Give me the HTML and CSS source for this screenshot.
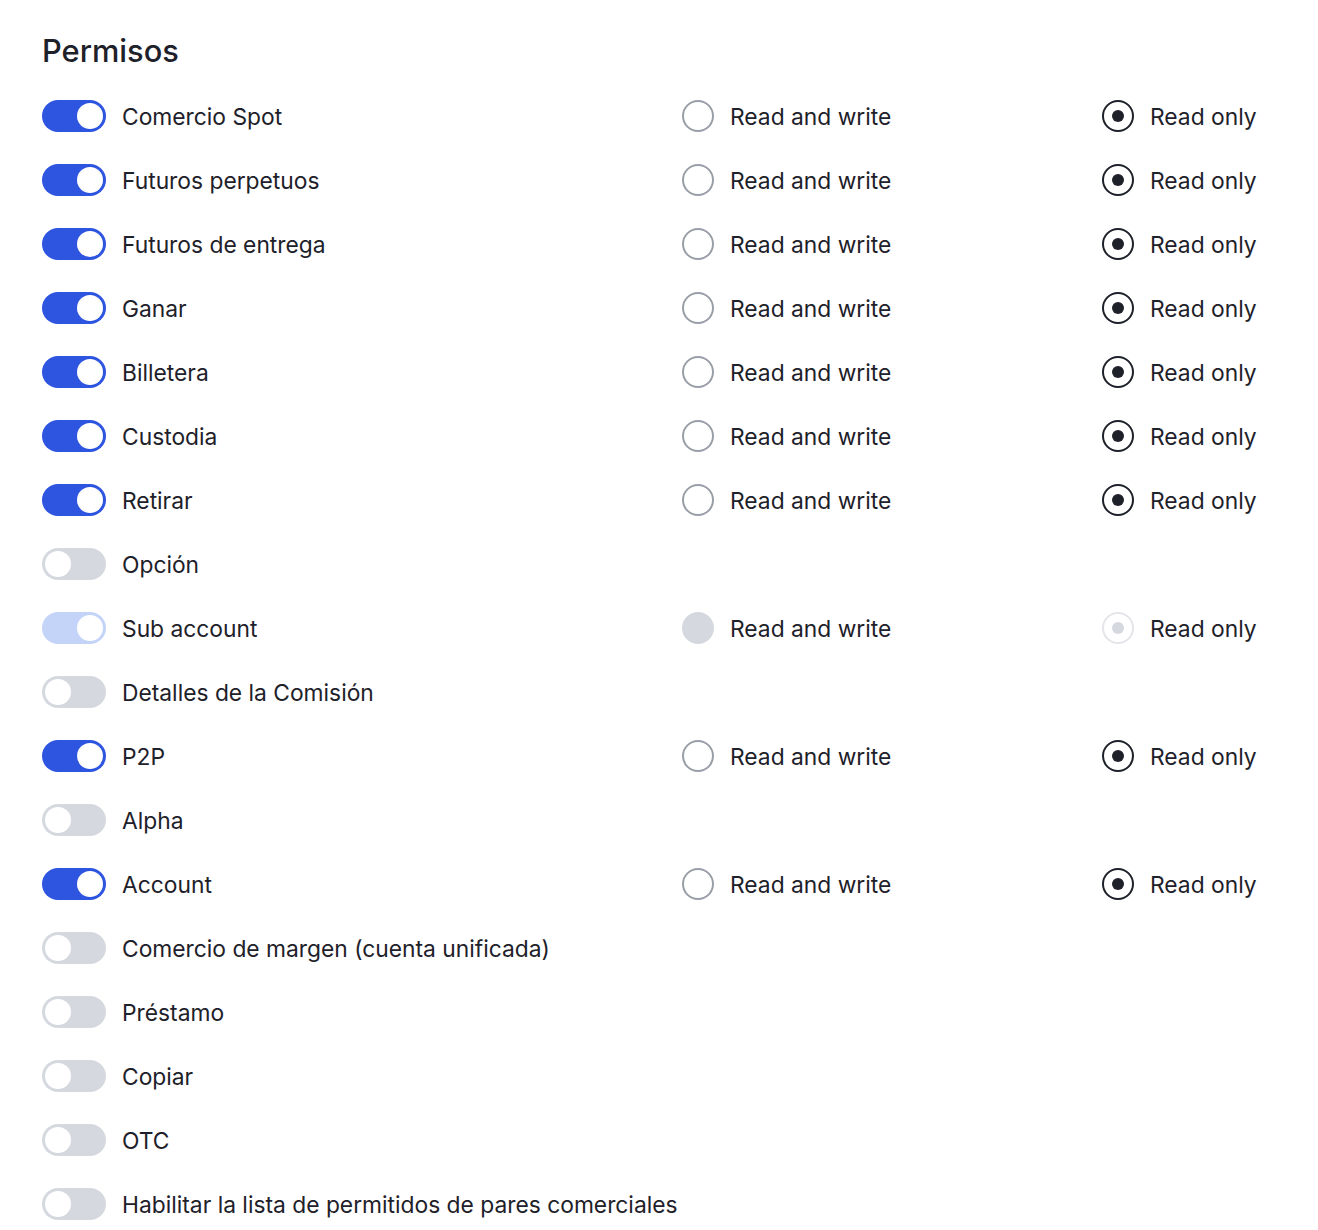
FILE: index.html
```html
<!DOCTYPE html>
<html lang="es">
<head>
<meta charset="utf-8">
<link rel="stylesheet" href="styles.css">
<title>Permisos</title>
</head>
<body>
<div class="panel">
  <h2 class="title">Permisos</h2>
  <div class="list">
    <div class="row">
      <div class="cell"><span class="switch on"><span class="knob"></span></span><span class="label">Comercio Spot</span></div>
      <div class="cell"><span class="radio"></span><span class="label">Read and write</span></div>
      <div class="cell"><span class="radio checked"></span><span class="label">Read only</span></div>
    </div>
    <div class="row">
      <div class="cell"><span class="switch on"><span class="knob"></span></span><span class="label">Futuros perpetuos</span></div>
      <div class="cell"><span class="radio"></span><span class="label">Read and write</span></div>
      <div class="cell"><span class="radio checked"></span><span class="label">Read only</span></div>
    </div>
    <div class="row">
      <div class="cell"><span class="switch on"><span class="knob"></span></span><span class="label">Futuros de entrega</span></div>
      <div class="cell"><span class="radio"></span><span class="label">Read and write</span></div>
      <div class="cell"><span class="radio checked"></span><span class="label">Read only</span></div>
    </div>
    <div class="row">
      <div class="cell"><span class="switch on"><span class="knob"></span></span><span class="label">Ganar</span></div>
      <div class="cell"><span class="radio"></span><span class="label">Read and write</span></div>
      <div class="cell"><span class="radio checked"></span><span class="label">Read only</span></div>
    </div>
    <div class="row">
      <div class="cell"><span class="switch on"><span class="knob"></span></span><span class="label">Billetera</span></div>
      <div class="cell"><span class="radio"></span><span class="label">Read and write</span></div>
      <div class="cell"><span class="radio checked"></span><span class="label">Read only</span></div>
    </div>
    <div class="row">
      <div class="cell"><span class="switch on"><span class="knob"></span></span><span class="label">Custodia</span></div>
      <div class="cell"><span class="radio"></span><span class="label">Read and write</span></div>
      <div class="cell"><span class="radio checked"></span><span class="label">Read only</span></div>
    </div>
    <div class="row">
      <div class="cell"><span class="switch on"><span class="knob"></span></span><span class="label">Retirar</span></div>
      <div class="cell"><span class="radio"></span><span class="label">Read and write</span></div>
      <div class="cell"><span class="radio checked"></span><span class="label">Read only</span></div>
    </div>
    <div class="row">
      <div class="cell"><span class="switch"><span class="knob"></span></span><span class="label">Opción</span></div>
    </div>
    <div class="row">
      <div class="cell"><span class="switch on disabled"><span class="knob"></span></span><span class="label">Sub account</span></div>
      <div class="cell"><span class="radio disabled"></span><span class="label">Read and write</span></div>
      <div class="cell"><span class="radio checked disabled"></span><span class="label">Read only</span></div>
    </div>
    <div class="row">
      <div class="cell"><span class="switch"><span class="knob"></span></span><span class="label">Detalles de la Comisión</span></div>
    </div>
    <div class="row">
      <div class="cell"><span class="switch on"><span class="knob"></span></span><span class="label">P2P</span></div>
      <div class="cell"><span class="radio"></span><span class="label">Read and write</span></div>
      <div class="cell"><span class="radio checked"></span><span class="label">Read only</span></div>
    </div>
    <div class="row">
      <div class="cell"><span class="switch"><span class="knob"></span></span><span class="label">Alpha</span></div>
    </div>
    <div class="row">
      <div class="cell"><span class="switch on"><span class="knob"></span></span><span class="label">Account</span></div>
      <div class="cell"><span class="radio"></span><span class="label">Read and write</span></div>
      <div class="cell"><span class="radio checked"></span><span class="label">Read only</span></div>
    </div>
    <div class="row">
      <div class="cell"><span class="switch"><span class="knob"></span></span><span class="label">Comercio de margen (cuenta unificada)</span></div>
    </div>
    <div class="row">
      <div class="cell"><span class="switch"><span class="knob"></span></span><span class="label">Préstamo</span></div>
    </div>
    <div class="row">
      <div class="cell"><span class="switch"><span class="knob"></span></span><span class="label">Copiar</span></div>
    </div>
    <div class="row">
      <div class="cell"><span class="switch"><span class="knob"></span></span><span class="label">OTC</span></div>
    </div>
    <div class="row">
      <div class="cell"><span class="switch"><span class="knob"></span></span><span class="label">Habilitar la lista de permitidos de pares comerciales</span></div>
    </div>
  </div>
</div>
</body>
</html>
```

FILE: styles.css
```css
html, body {
  margin: 0;
  padding: 0;
  background: #ffffff;
}

body {
  font-family: Inter, "Noto Sans", "Liberation Sans", sans-serif;
  color: #1e2129;
}

.panel {
  padding: 31px 42px 0 42px;
}

.title {
  margin: 0 0 13px 0;
  font-size: 30.8px;
  line-height: 40px;
  font-weight: 500;
  color: #1e2129;
}

.list {
  display: flex;
  flex-direction: column;
}

.row {
  display: grid;
  grid-template-columns: 640px 420px auto;
  height: 64px;
  align-items: center;
}

.cell {
  display: flex;
  align-items: center;
  gap: 16px;
  white-space: nowrap;
}

.label {
  font-size: 22.8px;
  line-height: 32px;
  color: #1e2129;
  position: relative;
  top: 1px;
}

.switch {
  flex: none;
  width: 64px;
  height: 32px;
  border-radius: 16px;
  background: #d5d8de;
  box-sizing: border-box;
  padding: 3px;
  display: flex;
  align-items: center;
}

.switch .knob {
  width: 26px;
  height: 26px;
  border-radius: 50%;
  background: #ffffff;
}

.switch.on {
  background: #2e55e0;
  justify-content: flex-end;
}

.switch.on.disabled {
  background: #c3d4f8;
}

.radio {
  flex: none;
  width: 32px;
  height: 32px;
  box-sizing: border-box;
  border-radius: 50%;
  border: 2px solid #9a9ea7;
  background: #ffffff;
  display: flex;
  align-items: center;
  justify-content: center;
}

.radio.checked {
  border-color: #1e2129;
}

.radio.checked::after {
  content: "";
  width: 12px;
  height: 12px;
  border-radius: 50%;
  background: #1e2129;
}

.radio.disabled {
  border-color: #d5d8de;
  background: #d5d8de;
}

.radio.checked.disabled {
  border-color: #e3e5e9;
  background: #ffffff;
}

.radio.checked.disabled::after {
  background: #d5d8de;
}
```
